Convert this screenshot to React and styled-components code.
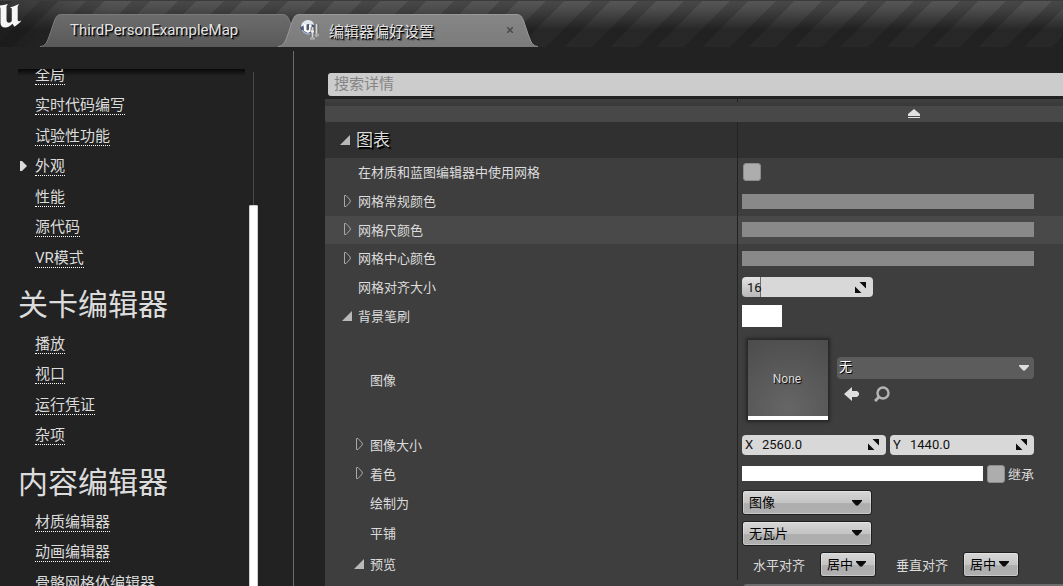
import React from 'react';
import styled, { createGlobalStyle } from 'styled-components';

const GlobalStyle = createGlobalStyle`
  * {
    box-sizing: border-box;
  }

  body {
    margin: 0;
    background: #222222;
    color: #dcdcdc;
    font-family: Roboto, "Noto Sans CJK SC", sans-serif;
    font-size: 13px;
  }

  button, input, select {
    font-family: inherit;
    font-size: 13px;
    margin: 0;
  }
`;

const Window = styled.div`
  display: flex;
  flex-direction: column;
  height: 100vh;
  overflow: hidden;
`;

/* title bar */

const TitleBar = styled.header`
  display: flex;
  align-items: flex-end;
  flex: none;
  height: 47px;
  background:
    linear-gradient(#3c3c3c, #3c3c3c) 0 0 / 100% 1px no-repeat,
    linear-gradient(90deg, rgba(20, 20, 20, 0.5), rgba(20, 20, 20, 0) 110px),
    linear-gradient(
      135deg,
      rgba(0, 0, 0, 0.16) 14%,
      transparent 15% 44%,
      rgba(0, 0, 0, 0.16) 45% 64%,
      transparent 65% 94%,
      rgba(0, 0, 0, 0.16) 95%
    ) 0 0 / 46px 46px,
    linear-gradient(#565656, #4e4e4e 8px, #272727 30px, #282828);
`;

const LogoBox = styled.div`
  flex: none;
  width: 40px;
  height: 47px;
  padding-top: 4px;

  svg {
    display: block;
  }
`;

const Tabs = styled.nav`
  display: flex;
  min-width: 0;
`;

const TabButton = styled.button`
  display: flex;
  width: ${props => props.$width};
  height: 33px;
  padding: 0;
  border: none;
  background: none;
  color: #e4e4e4;
  font-size: 15px;
  text-align: left;
  text-shadow: 1px 1px 0 #000, 2px 2px 1px rgba(0, 0, 0, 0.5);

  & + & {
    margin-left: -26px;
  }

  > svg {
    flex: none;
  }
`;

const TabFace = styled.span`
  display: flex;
  flex: 1;
  align-items: center;
  gap: 9px;
  padding: ${props => (props.$active ? '0 3px 2px 0' : '0 3px 2px 8px')};
  border-top: 1px solid ${props => (props.$active ? '#989898' : '#7a7a7a')};
  background: ${props =>
    props.$active ? 'linear-gradient(#868686, #7b7b7b)' : 'linear-gradient(#6c6c6c, #595959)'};
  white-space: nowrap;
`;

const TabClose = styled.span`
  display: flex;
  margin-left: auto;
`;

/* sections list */

const Body = styled.div`
  display: flex;
  flex: 1;
  min-height: 0;
`;

const Sidebar = styled.aside`
  display: flex;
  flex: none;
  width: 294px;
  margin-top: 4px;
  padding: 18px 35px 0 18px;
  border-right: 1px solid #6a6a6a;
`;

const SectionScroll = styled.div`
  position: relative;
  flex: 1;
  overflow: hidden;

  &::before {
    content: '';
    position: absolute;
    top: 0;
    left: 0;
    right: 4px;
    height: 7px;
    background: linear-gradient(#080808, rgba(8, 8, 8, 0));
  }
`;

const SectionBody = styled.div`
  margin-top: -9px;
`;

const SectionTitle = styled.h2`
  margin: 0;
  padding: 8px 0 0;
  font-size: 30px;
  font-weight: 400;
  line-height: 48px;
`;

const SectionList = styled.ul`
  margin: 0;
  padding: 0 0 0 17px;
  list-style: none;
`;

const SectionItem = styled.li`
  position: relative;
  display: flex;
  align-items: center;
  height: 30px;

  &:nth-child(even) {
    margin-bottom: 1px;
  }

  svg {
    position: absolute;
    left: -15px;
  }
`;

const SectionLink = styled.a`
  border-bottom: 1px dotted #ffffff;
  color: #dcdcdc;
  font-size: 15px;
  line-height: 18px;
  text-decoration: none;
  white-space: nowrap;
`;

const ScrollTrack = styled.div`
  flex: none;
  width: 9px;
  margin-top: 3px;
  background: linear-gradient(#4a4a4a, #4a4a4a) center / 1px 100% no-repeat;
`;

const ScrollThumb = styled.div`
  height: 100%;
  margin-top: 133px;
  border: 1px solid #cfcfcf;
  border-radius: 1px;
  background: #ffffff;
`;

/* details panel */

const Details = styled.main`
  display: flex;
  flex: 1;
  flex-direction: column;
  min-width: 0;
  padding: 26px 0 0 31px;
`;

const SearchInput = styled.input`
  flex: none;
  height: 23px;
  margin-left: 3px;
  padding: 0 6px 2px;
  border: none;
  border-radius: 3px 0 0 3px;
  background: #cccccc;
  color: #222222;
  font-size: 15px;

  &::placeholder {
    color: #858585;
    opacity: 1;
  }
`;

const Panel = styled.div`
  flex: 1;
  margin-top: 3px;
  background: #3e3e3e;
  overflow: hidden;
`;

const NameCell = styled.div`
  display: flex;
  align-items: center;
  width: 413px;
  padding: 0 0 2px ${props => 17 + props.$level * 12}px;
  border-right: 1px solid #222222;
`;

const ValueCell = styled.div`
  display: flex;
  align-items: center;
  gap: 4px;
  flex: 1;
  min-width: 0;
  padding: 0 0 1px 4px;
`;

const Row = styled.div`
  display: flex;
  height: ${props => props.$height || 29}px;
  background: ${props => (props.$hover ? '#494949' : 'transparent')};
`;

const PreviousRow = styled(Row)`
  border-bottom: 4px solid #3a3a3a;
`;

const AdvancedBar = styled.div`
  height: 16px;
  border-radius: 0 0 0 3px;
  background: #484848;
`;

const AdvancedButton = styled.button`
  display: block;
  height: 16px;
  margin-left: 583px;
  padding: 0;
  border: none;
  background: none;

  svg {
    display: block;
  }
`;

const CategoryRow = styled(Row)`
  background: #303030;

  ${NameCell} {
    padding: 0 0 0 15px;
  }
`;

const CategoryTitle = styled.h3`
  margin: 0;
  padding-bottom: 4px;
  font-size: 17px;
  font-weight: 400;
  text-shadow: 1px 1px 0 #000, 2px 2px 1px #000;
`;

const Expander = styled.button`
  display: flex;
  flex: none;
  width: 16px;
  padding: 0;
  border: none;
  background: none;
`;

const Indent = styled.span`
  flex: none;
  width: 16px;
`;

const CheckBox = styled.input`
  appearance: none;
  flex: none;
  width: 18px;
  height: 18px;
  border: 1px solid #8c8c8c;
  border-radius: 3px;
  background: #adadad;
`;

const CheckField = styled.div`
  display: flex;
  padding-left: 1px;
`;

const CheckLabel = styled.label`
  display: flex;
  align-items: center;
  gap: 3px;
`;

const ColorBar = styled.button`
  flex: none;
  width: ${props => props.$width || 292}px;
  height: ${props => props.$height || 15}px;
  padding: 0;
  border: none;
  background: ${props => props.$color};
`;

const SpinBox = styled.label`
  display: flex;
  align-items: center;
  flex: none;
  width: ${props => props.$width}px;
  height: 20px;
  padding: 0 7px 0 3px;
  border-radius: 4px;
  background: ${props =>
    props.$fill
      ? `linear-gradient(#e4e4e4, #b8b8b8) 0 0 / ${props.$fill}px 100% no-repeat, linear-gradient(#6e6e6e, #6e6e6e) ${props.$fill}px 0 / 1px 100% no-repeat, #d8d8d8`
      : '#d8d8d8'};
  color: #111111;
`;

const SpinAxis = styled.span`
  width: 17px;
`;

const SpinInput = styled.input`
  flex: 1;
  width: 0;
  padding: 0 0 0 ${props => (props.$inset ? '2px' : '0')};
  border: none;
  background: none;
  color: #111111;
`;

const Thumbnail = styled.div`
  display: flex;
  align-items: center;
  justify-content: center;
  flex: none;
  width: 80px;
  height: 80px;
  margin: 0 5px 0 6px;
  padding: 2px 2px 0 0;
  border-bottom: 4px solid #ffffff;
  background: radial-gradient(circle at 50% 90%, #666666, #4c4c4c);
  box-shadow: 0 0 3px 2px #262626;
  font-size: 12px;
  text-shadow: 1px 1px 1px #000;
`;

const AssetPicker = styled.div`
  display: flex;
  flex-direction: column;
  gap: 7px;
  width: 197px;
  padding-bottom: 2px;
`;

const AssetTools = styled.div`
  display: flex;
  gap: 14px;
  padding-left: 7px;
`;

const ToolButton = styled.button`
  display: flex;
  padding: 0;
  border: none;
  background: none;
`;

const SelectBox = styled.div`
  display: flex;
  align-items: center;
  flex: none;
  width: ${props => props.$width}px;

  svg {
    flex: none;
    margin-left: ${props => (props.$flat ? -15 : -20)}px;
    pointer-events: none;
  }
`;

const Select = styled.select`
  appearance: none;
  width: 100%;
  height: 25px;
  padding: 0 6px;
  border: 1px solid #1e1e1e;
  border-radius: 3px;
  background: linear-gradient(#d6d6d6, #c4c4c4 50%, #adadad 55%, #b0b0b0);
  box-shadow: inset 0 0 0 1px rgba(255, 255, 255, 0.3);
  color: #000000;
`;

const FlatSelect = styled(Select)`
  height: 22px;
  padding: 0 2px 2px;
  border: none;
  border-radius: 4px;
  background: #5c5c5c;
  box-shadow: none;
  color: #ffffff;
  text-shadow: 1px 1px 0 #000;
`;

const AlignField = styled.div`
  display: flex;
  align-items: center;
  gap: 15px;
  padding-left: 11px;

  & + & {
    padding-left: 16px;
  }
`;

const PreviewEdge = styled.div`
  height: 20px;
  margin: 4px 0 0 418px;
  border-radius: 4px 0 0 0;
  background: #6c6c6c;
`;

const EngineLogo = () => (
  <svg width="22" height="25" viewBox="0 0 22 25" fill="#f6f6f6">
    <path d="M0 1.500C2 1.300 5 .6 8 0L6.500 2.200V15.500C6.500 17.700 7.500 18.700 9 18.700C10.500 18.700 11.400 17.700 11.800 16.800V4.500L10 3.200C13 2.700 16 1.600 19 0L17.700 2.400V15.600C17.700 17.400 18.900 17.800 21.500 16.300C20 19 17 21 14.500 22.800L12.400 19.800C10.500 22 8 23.600 5 23.600C2 23.600.5 21.500.5 19V5.500C.5 4.300.4 3.600 0 3.200Z" />
  </svg>
);

const PreferencesIcon = () => (
  <svg width="20" height="22" viewBox="0 0 20 22">
    <circle cx="7.500" cy="8.500" r="7" fill="#4b5772" />
    <path d="M1 8C1 3 5 1 8 1C12 1 14 4 14 6C10 4 5 5 1 8Z" fill="#e3e7ee" />
    <path d="M2 11C4 15 9 16 12 14" fill="none" stroke="#a9b4cb" strokeWidth="1.500" />
    <path d="M3.500 5.500L6.500 5V11L8 11.500L9 10.500V5.500L11.500 5V12L8 14L4 12Z" fill="#ffffff" />
    <path d="M12.500 8V20M16.500 5V18" stroke="#555555" strokeWidth="3.600" />
    <path d="M12.500 8V19.500M16.500 5V18" stroke="#d6d6d6" strokeWidth="2" />
    <path d="M10 19.500H15M14.500 16H19" stroke="#a8a8a8" strokeWidth="2.400" />
    <path d="M11 12.500H14" stroke="#eeeeee" strokeWidth="2" />
  </svg>
);

const TabEdge = ({ id, top, bottom, line, flip }) => (
  <svg width="22" height="33" viewBox="0 0 22 33">
    <defs>
      <linearGradient id={id} x1="0" y1="0" x2="0" y2="1">
        <stop offset="0" stopColor={top} />
        <stop offset="1" stopColor={bottom} />
      </linearGradient>
    </defs>
    <g transform={flip ? 'matrix(-1 0 0 1 22 0)' : undefined}>
      <path d="M0 33C6 32 7 28 10 20L14 8C16 2 18 0 22 0V33Z" fill={`url(#${id})`} />
      <path d="M0 32.500C6 32 7 28 10 20L14 8C16 2 18 .5 22 .5" fill="none" stroke={line} />
    </g>
  </svg>
);

const OpenArrow = () => (
  <svg width="10" height="10" viewBox="0 0 10 10">
    <path d="M10 0V10H0Z" fill="#b9b9b9" />
  </svg>
);

const ClosedArrow = () => (
  <svg width="9" height="12" viewBox="0 0 9 12">
    <path d="M2.500 .5H4L8.200 5V7L4 11.500H2.500Z" fill="none" stroke="#a8a8a8" />
  </svg>
);

const SpinIcon = () => (
  <svg width="11" height="11" viewBox="0 0 11 11">
    <path d="M4.500 0H11V6.500ZM0 4.500V11H6.500Z" fill="#0d0d0d" />
  </svg>
);

const DownArrow = ({ color = '#0a0a0a' }) => (
  <svg width="10" height="6" viewBox="0 0 10 6">
    <path d="M0 0H10V1L6 5.500H4L0 1Z" fill={color} />
  </svg>
);

const Tab = ({ id, width, active, children }) => {
  const tone = active
    ? { top: '#868686', bottom: '#7b7b7b', line: '#989898' }
    : { top: '#6c6c6c', bottom: '#595959', line: '#7a7a7a' };

  return (
    <TabButton type="button" $width={width}>
      <TabEdge id={`${id}-left`} {...tone} />
      <TabFace $active={active}>{children}</TabFace>
      <TabEdge id={`${id}-right`} {...tone} flip />
    </TabButton>
  );
};

const Sections = ({ items }) => (
  <SectionList>
    {items.map(item => (
      <SectionItem key={item}>
        {item === '外观' && (
          <svg width="7" height="10" viewBox="0 0 7 10">
            <path d="M0 0H2L7 5L2 10H0Z" fill="#dcdcdc" />
          </svg>
        )}
        <SectionLink href="#">{item}</SectionLink>
      </SectionItem>
    ))}
  </SectionList>
);

const Property = ({ name, level = 0, arrow, height, hover, children }) => (
  <Row $height={height} $hover={hover}>
    <NameCell $level={level}>
      {arrow ? (
        <Expander type="button" aria-label={name}>
          {arrow === 'open' ? <OpenArrow /> : <ClosedArrow />}
        </Expander>
      ) : (
        <Indent />
      )}
      <span>{name}</span>
    </NameCell>
    <ValueCell>{children}</ValueCell>
  </Row>
);

const Spin = ({ axis, value, width, fill, name }) => (
  <SpinBox $width={width} $fill={fill}>
    {axis && <SpinAxis>{axis}</SpinAxis>}
    <SpinInput aria-label={name} defaultValue={value} $inset={!axis} />
    <SpinIcon />
  </SpinBox>
);

const DropDown = ({ name, value, width }) => (
  <SelectBox $width={width}>
    <Select aria-label={name} defaultValue={value}>
      <option>{value}</option>
    </Select>
    <DownArrow />
  </SelectBox>
);

const generalItems = ['全局', '实时代码编写', '试验性功能', '外观', '性能', '源代码', 'VR模式'];
const levelItems = ['播放', '视口', '运行凭证', '杂项'];
const contentItems = ['材质编辑器', '动画编辑器', '骨骼网格体编辑器'];

const App = () => (
  <Window>
    <GlobalStyle />
    <TitleBar>
      <LogoBox>
        <EngineLogo />
      </LogoBox>
      <Tabs>
        <Tab id="map" width="264px">ThirdPersonExampleMap</Tab>
        <Tab id="prefs" width="260px" active>
          <PreferencesIcon />
          编辑器偏好设置
          <TabClose>
            <svg width="6" height="6" viewBox="0 0 6 6">
              <path d="M0 0L6 6M6 0L0 6" stroke="#484848" strokeWidth="1.500" />
            </svg>
          </TabClose>
        </Tab>
      </Tabs>
    </TitleBar>

    <Body>
      <Sidebar>
        <SectionScroll>
          <SectionBody>
            <Sections items={generalItems} />
            <SectionTitle>关卡编辑器</SectionTitle>
            <Sections items={levelItems} />
            <SectionTitle>内容编辑器</SectionTitle>
            <Sections items={contentItems} />
          </SectionBody>
        </SectionScroll>
        <ScrollTrack>
          <ScrollThumb />
        </ScrollTrack>
      </Sidebar>

      <Details>
        <SearchInput type="text" placeholder="搜索详情" aria-label="搜索详情" />
        <Panel>
          <PreviousRow $height={7}>
            <NameCell $level={0} />
          </PreviousRow>
          <AdvancedBar>
            <AdvancedButton type="button" aria-label="高级">
              <svg width="12" height="10" viewBox="0 0 12 10">
                <path d="M6 0L12 5V7H0V5Z" fill="#e0e0e0" />
                <path d="M0 8.500H12" stroke="#e0e0e0" />
              </svg>
            </AdvancedButton>
          </AdvancedBar>
          <CategoryRow $height={36}>
            <NameCell $level={0}>
              <Expander type="button" aria-label="图表">
                <OpenArrow />
              </Expander>
              <CategoryTitle>图表</CategoryTitle>
            </NameCell>
          </CategoryRow>

          <Property name="在材质和蓝图编辑器中使用网格">
            <CheckField>
              <CheckBox type="checkbox" aria-label="在材质和蓝图编辑器中使用网格" />
            </CheckField>
          </Property>
          <Property name="网格常规颜色" arrow="closed">
            <ColorBar type="button" aria-label="网格常规颜色" $color="#898989" />
          </Property>
          <Property name="网格尺颜色" arrow="closed" height={28} hover>
            <ColorBar type="button" aria-label="网格尺颜色" $color="#898989" />
          </Property>
          <Property name="网格中心颜色" arrow="closed">
            <ColorBar type="button" aria-label="网格中心颜色" $color="#898989" />
          </Property>
          <Property name="网格对齐大小">
            <Spin name="网格对齐大小" value="16" width={131} fill={18} />
          </Property>
          <Property name="背景笔刷" arrow="open">
            <ColorBar type="button" aria-label="背景笔刷" $color="#ffffff" $width={40} $height={22} />
          </Property>
          <Property name="图像" level={1} height={99}>
            <Thumbnail>None</Thumbnail>
            <AssetPicker>
              <SelectBox $width={197} $flat>
                <FlatSelect aria-label="图像" defaultValue="无">
                  <option>无</option>
                </FlatSelect>
                <DownArrow color="#dedede" />
              </SelectBox>
              <AssetTools>
                <ToolButton type="button" aria-label="使用所选资产">
                  <svg width="16" height="16" viewBox="0 0 16 16">
                    <path d="M0 8L8 1V5H13L15 7V9L13 11H8V15Z" fill="#dedede" />
                  </svg>
                </ToolButton>
                <ToolButton type="button" aria-label="浏览">
                  <svg width="16" height="16" viewBox="0 0 16 16">
                    <circle cx="9" cy="7" r="5.500" fill="none" stroke="#b4b4b4" strokeWidth="2.400" />
                    <path d="M5.500 10.500L1 15" stroke="#b4b4b4" strokeWidth="3" />
                  </svg>
                </ToolButton>
              </AssetTools>
            </AssetPicker>
          </Property>
          <Property name="图像大小" level={1} arrow="closed" height={30}>
            <Spin name="图像大小 X" axis="X" value="2560.0" width={144} />
            <Spin name="图像大小 Y" axis="Y" value="1440.0" width={144} />
          </Property>
          <Property name="着色" level={1} arrow="closed" height={28}>
            <ColorBar type="button" aria-label="着色" $color="#ffffff" $width={241} />
            <CheckLabel>
              <CheckBox type="checkbox" />
              继承
            </CheckLabel>
          </Property>
          <Property name="绘制为" level={1} height={30}>
            <DropDown name="绘制为" value="图像" width={130} />
          </Property>
          <Property name="平铺" level={1} height={31}>
            <DropDown name="平铺" value="无瓦片" width={130} />
          </Property>
          <Property name="预览" level={1} arrow="open" height={31}>
            <AlignField>
              <span>水平对齐</span>
              <DropDown name="水平对齐" value="居中" width={56} />
            </AlignField>
            <AlignField>
              <span>垂直对齐</span>
              <DropDown name="垂直对齐" value="居中" width={56} />
            </AlignField>
          </Property>
          <PreviewEdge />
        </Panel>
      </Details>
    </Body>
  </Window>
);

export default App;
